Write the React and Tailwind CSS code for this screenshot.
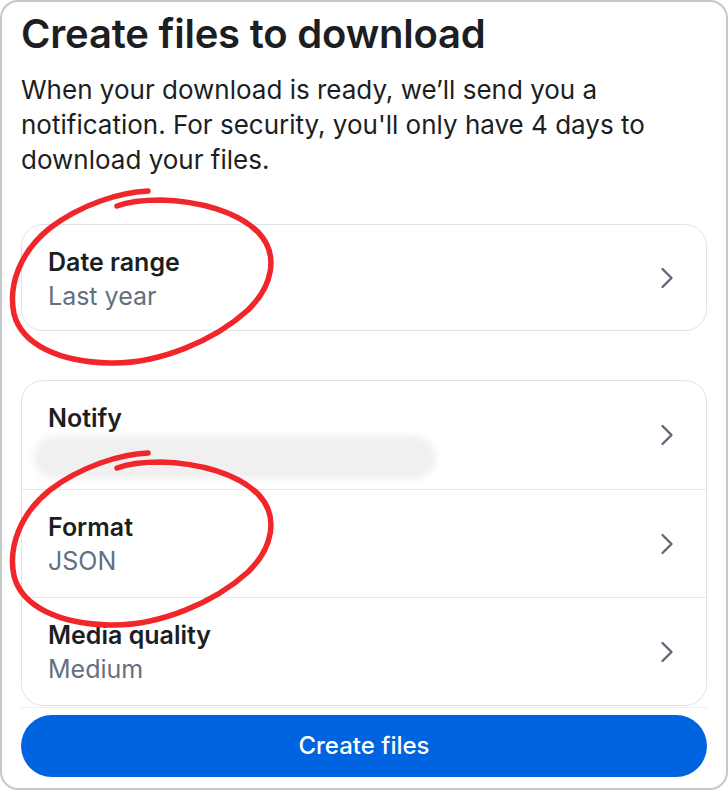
import { ChevronRight } from 'lucide-react';

const font = { fontFamily: 'Inter, "Noto Sans", sans-serif' };

// hand-drawn red ring used to highlight a row
function Scribble({ dy = 0 }) {
  return (
    <path
      transform={`translate(0 ${dy})`}
      d="M148 191 C120 192, 80 205, 50 228 C20 252, 8 285, 14 314 C22 345, 60 362, 110 363 C160 364, 215 340, 248 310 C272 287, 280 255, 258 232 C238 212, 200 201, 160 200 C140 200, 125 203, 117 206"
      fill="none"
      stroke="#f0262b"
      strokeWidth="5.5"
      strokeLinecap="round"
      strokeLinejoin="round"
    />
  );
}

function Row({ title, value, children, divider, h = 'h-[108px]' }) {
  return (
    <div className={`flex ${h} items-start justify-between pl-[26px] pr-[21px] ${divider ? 'border-t border-[#e6e8ec]' : ''}`}>
      <div className="flex flex-col pt-[20px]">
        <span className="text-[25px] leading-[34px] font-semibold text-[#1c1e21]">{title}</span>
        {value && <span className="text-[25px] leading-[34px] text-[#65707f]">{value}</span>}
        {children}
      </div>
      <ChevronRight className="self-center text-[#5f6877]" size={36} strokeWidth={1.6} />
    </div>
  );
}

export default function App() {
  return (
    <div className="relative w-[728px] h-[790px] bg-white" style={font}>
      <div className="flex flex-col h-full border-2 border-[#c8c8c8] rounded-[18px] px-[19px] pt-[10px] overflow-hidden">
        <h1 className="text-[40px] leading-[44px] font-semibold text-[#1c1e21] tracking-[-0.2px]">
          Create files to download
        </h1>
        <p className="mt-[16px] text-[26px] leading-[35px] text-[#1c1e21]">
          When your download is ready, we’ll send you a notification. For security, you'll only have 4 days to download your files.
        </p>

        <div className="mt-[47px] rounded-[22px] border border-[#dfe2e6] bg-white">
          <Row title="Date range" value="Last year" h="h-[105px]" />
        </div>

        <div className="mt-[49px] rounded-[22px] border border-[#dfe2e6] bg-white overflow-hidden">
          <Row title="Notify">
            <div className="-ml-[14px] mt-[1px] w-[402px] h-[43px] rounded-full bg-[#f0f0f0] blur-[3px]" />
          </Row>
          <Row title="Format" value="JSON" divider />
          <Row title="Media quality" value="Medium" divider />
        </div>

        <div className="mt-[1px] h-px bg-[#eceef1]" />
        <button className="mt-[7px] h-[62px] w-full rounded-full bg-[#0064e0] text-white text-[24px] font-medium">
          Create files
        </button>
      </div>

      <svg className="absolute inset-0 pointer-events-none" width="728" height="790" viewBox="0 0 728 790">
        <Scribble />
        <Scribble dy={262} />
      </svg>
    </div>
  );
}
